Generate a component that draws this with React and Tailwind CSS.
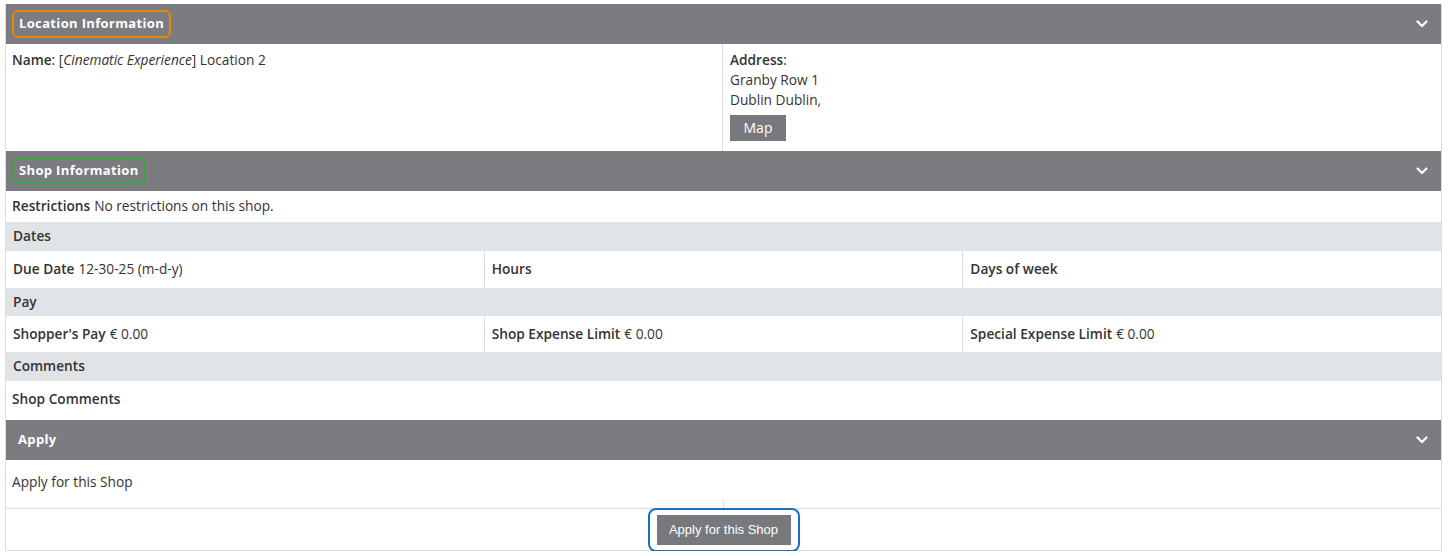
import React from "react";

const Chevron = () => (
  <svg width="12" height="8" viewBox="0 0 12 8" className="mr-[7px]">
    <path d="M1.5 1.5 L6 6 L10.5 1.5" fill="none" stroke="#fff" strokeWidth="2.2" strokeLinecap="round" strokeLinejoin="round" />
  </svg>
);

const Header = ({ title, ring }) => (
  <div className="flex h-10 items-center justify-between bg-[#7a7c80] pl-[6px] pr-[6px]">
    <span
      className={`rounded-[6px] border-2 px-[5px] py-[2px] text-[13px] font-bold tracking-[0.35px] text-white ${ring}`}
    >
      {title}
    </span>
    <Chevron />
  </div>
);

const GreyRow = ({ children, h = "h-[29px]" }) => (
  <div className={`flex ${h} items-center bg-[#e1e4e7] px-[7px] font-semibold`}>{children}</div>
);

const Cell = ({ label, value, last }) => (
  <div className={`flex flex-1 items-center px-[7px] ${last ? "" : "border-r border-[#dcdcdc]"}`}>
    <span className="font-semibold">{label}</span>
    {value && <span className="ml-1">{value}</span>}
  </div>
);

export default function App() {
  return (
    <div className="bg-white pt-1 pl-[5px]" style={{ fontFamily: "'Open Sans', 'DejaVu Sans', sans-serif" }}>
      <div className="w-[1437px] border-x border-b border-[#dcdcdc] text-[13.7px] text-[#333]">
        {/* Location */}
        <Header title="Location Information" ring="border-[#e8860c]" />
        <div className="flex h-[107px]">
          <div className="w-[717px] border-r border-[#dcdcdc] px-[6px] pt-[6px]">
            <span className="font-semibold">Name</span>: [<i>Cinematic Experience</i>] Location 2
          </div>
          <div className="flex-1 px-[7px] pt-[6px] leading-[20px]">
            <div>
              <span className="font-semibold">Address</span>:
            </div>
            <div>Granby Row 1</div>
            <div>Dublin Dublin,</div>
            <button className="mt-[5px] h-[26px] w-14 bg-[#77797d] text-[14px] text-white">Map</button>
          </div>
        </div>

        {/* Shop */}
        <div className="flex h-10 items-center justify-between bg-[#7a7c80] pl-[6px] pr-[6px]">
          <span className="rounded-[6px] border-2 border-[#3da53d] px-[5px] py-[1px] text-[13px] font-bold tracking-[0.35px] text-white">
            Shop Information
          </span>
          <Chevron />
        </div>
        <div className="flex h-[31px] items-center px-[6px]">
          <span className="font-semibold">Restrictions</span>
          <span className="ml-1">No restrictions on this shop.</span>
        </div>
        <GreyRow>Dates</GreyRow>
        <div className="flex h-[37px]">
          <Cell label="Due Date" value="12-30-25 (m-d-y)" />
          <Cell label="Hours" />
          <Cell label="Days of week" last />
        </div>
        <GreyRow h="h-[28px]">Pay</GreyRow>
        <div className="flex h-9">
          <Cell label="Shopper's Pay" value="€ 0.00" />
          <Cell label="Shop Expense Limit" value="€ 0.00" />
          <Cell label="Special Expense Limit" value="€ 0.00" last />
        </div>
        <GreyRow>Comments</GreyRow>
        <div className="flex h-[39px] items-center px-[6px] pb-[2px] font-semibold">Shop Comments</div>

        {/* Apply */}
        <div className="flex h-10 items-center justify-between bg-[#7a7c80] pl-[12px] pr-[6px]">
          <span className="text-[13px] font-bold tracking-[0.35px] text-white">Apply</span>
          <Chevron />
        </div>
        <div className="flex h-12">
          <div className="flex w-[717px] items-center px-[6px] pb-[4px]">Apply for this Shop</div>
          <div className="flex flex-1 items-end">
            <div className="h-2 border-l border-[#dcdcdc]" />
          </div>
        </div>
        <div className="flex h-[42px] items-center justify-center border-t border-[#dcdcdc]">
          <div className="rounded-[8px] border-2 border-[#1a6fc0] px-[7px] py-[5px]">
            <button
              className="h-[30px] w-[134px] bg-[#77797d] text-[13px] text-white"
              style={{ fontFamily: "'Liberation Sans', Arial, sans-serif" }}
            >
              Apply for this Shop
            </button>
          </div>
        </div>
      </div>
    </div>
  );
}
